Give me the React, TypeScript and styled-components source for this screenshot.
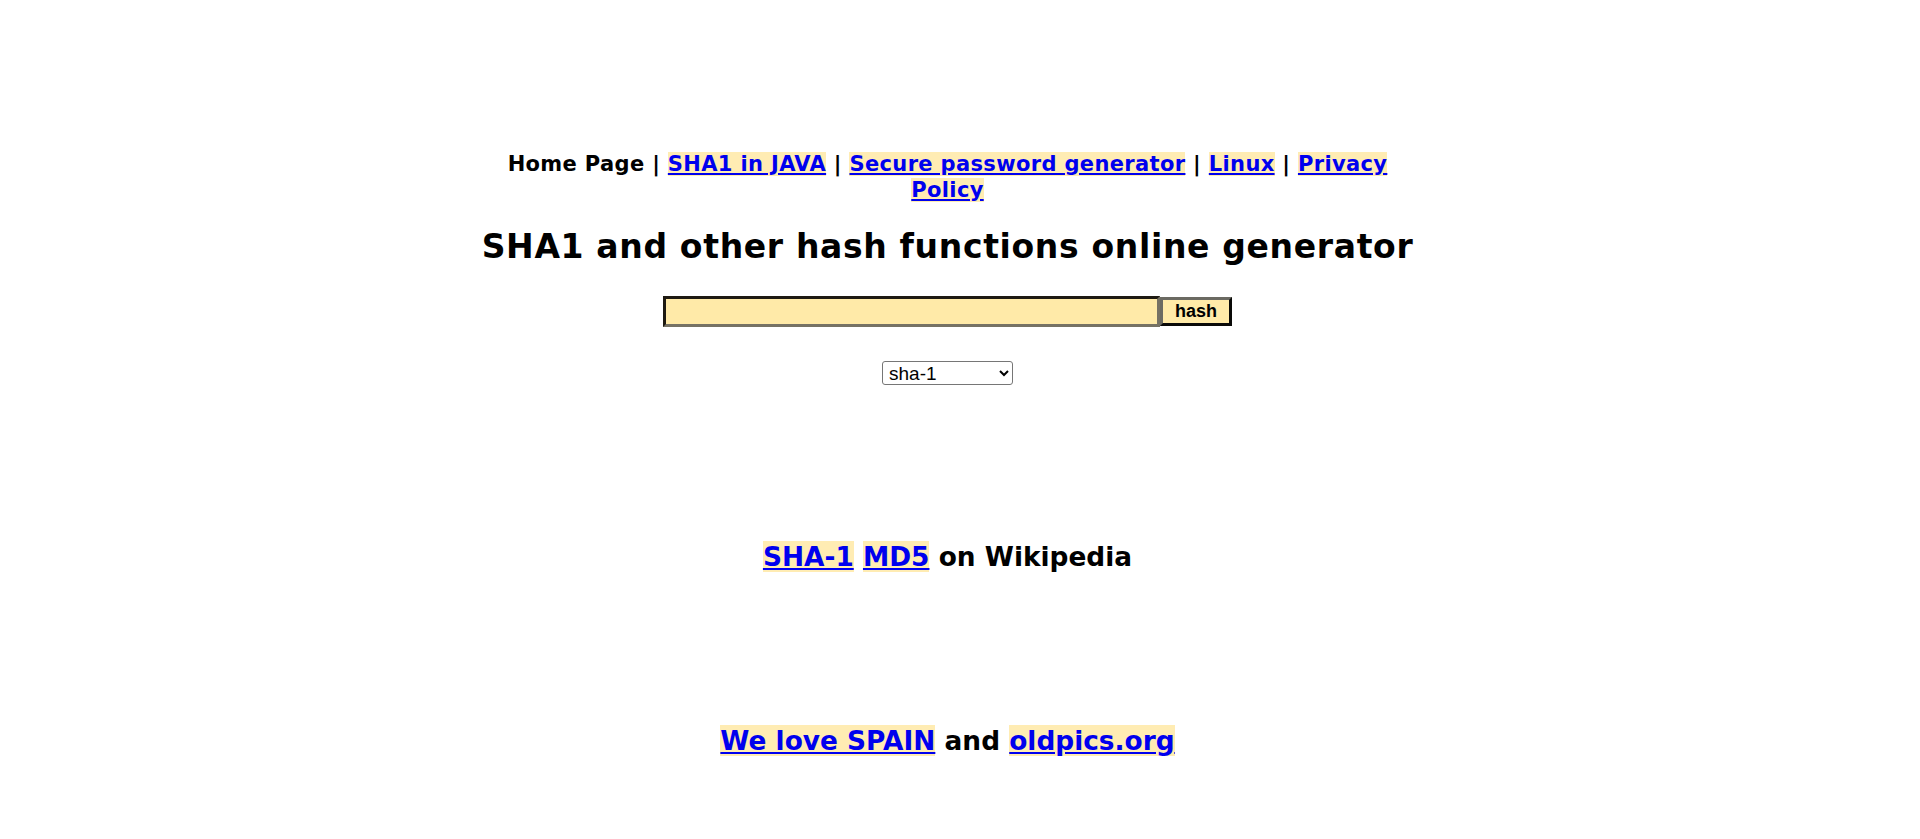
import React from "react";
import styled, { createGlobalStyle } from "styled-components";

const GlobalStyle = createGlobalStyle`
  html, body {
    margin: 0;
    padding: 0;
    background: #ffffff;
  }
  body {
    font-family: "DejaVu Sans", Verdana, sans-serif;
    color: #000000;
  }
  ::-webkit-scrollbar {
    width: 17px;
    background: #f1f1f1;
  }
  ::-webkit-scrollbar-track {
    background: #f1f1f1;
  }
  ::-webkit-scrollbar-thumb {
    background: #c1c1c1;
    border-left: 2px solid #f1f1f1;
    border-right: 2px solid #f1f1f1;
  }
  ::-webkit-scrollbar-button:single-button {
    display: block;
    height: 17px;
    background: #f1f1f1;
  }
`;

const Page = styled.div`
  min-height: 2000px;
  display: flex;
  flex-direction: column;
  align-items: center;
  padding: 152px 25px 0 0;
  box-sizing: border-box;
`;

const Nav = styled.nav`
  width: 920px;
  text-align: center;
  font-size: 21px;
  font-weight: bold;
  letter-spacing: 0.35px;
  line-height: 25.5px;
`;

const HiLink = styled.a`
  color: #0000ee;
  background: #ffecb3;
  text-decoration: underline;
`;

const Title = styled.h1`
  margin: 24.3px 0 0;
  font-size: 33px;
  font-weight: bold;
  letter-spacing: 0.66px;
  line-height: normal;
  white-space: nowrap;
`;

const HashForm = styled.form`
  display: flex;
  align-items: center;
  margin-top: 29.7px;
`;

const HashInput = styled.input`
  box-sizing: border-box;
  width: 497px;
  height: 31px;
  background: #ffeaa8;
  border: 3px solid;
  border-top-color: #1e1a12;
  border-left-color: #1e1a12;
  border-bottom-color: #767264;
  border-right-color: #767264;
  padding: 0 4px;
  font-size: 16px;
  outline: none;
`;

const HashButton = styled.button`
  box-sizing: border-box;
  width: 72px;
  height: 29px;
  background: #ffeaa8;
  border: 3px solid;
  border-top-color: #6b6a62;
  border-left-color: #6b6a62;
  border-bottom-color: #0a0a08;
  border-right-color: #0a0a08;
  font-family: "Liberation Sans", Arial, sans-serif;
  font-weight: bold;
  font-size: 18px;
  color: #000;
  padding: 0;
  cursor: pointer;
`;

const AlgoSelect = styled.select`
  margin-top: 34px;
  box-sizing: border-box;
  width: 131px;
  height: 24px;
  font-family: "Liberation Sans", Arial, sans-serif;
  font-size: 19px;
  color: #000;
  background: #fff;
  border: 1px solid #767676;
  border-radius: 3px;
  padding: 0 2px;
`;

const BigLine = styled.p<{ $gap: number }>`
  margin: ${(p) => p.$gap}px 0 0;
  font-size: 26.4px;
  font-weight: bold;
  line-height: normal;
  text-align: center;
`;

export default function App() {
  return (
    <>
      <GlobalStyle />
      <Page>
        <Nav>
          Home Page | <HiLink href="#">SHA1 in JAVA</HiLink> |{" "}
          <HiLink href="#">Secure password generator</HiLink> |{" "}
          <HiLink href="#">Linux</HiLink> | <HiLink href="#">Privacy Policy</HiLink>
        </Nav>
        <Title>SHA1 and other hash functions online generator</Title>
        <HashForm onSubmit={(e) => e.preventDefault()}>
          <HashInput type="text" />
          <HashButton type="submit">hash</HashButton>
        </HashForm>
        <AlgoSelect defaultValue="sha-1">
          <option value="sha-1">sha-1</option>
          <option value="md5">md5</option>
          <option value="sha-256">sha-256</option>
          <option value="sha-512">sha-512</option>
        </AlgoSelect>
        <BigLine $gap={155.8}>
          <HiLink href="#">SHA-1</HiLink> <HiLink href="#">MD5</HiLink> on Wikipedia
        </BigLine>
        <BigLine $gap={153.5}>
          <HiLink href="#">We love SPAIN</HiLink> and <HiLink href="#">oldpics.org</HiLink>
        </BigLine>
      </Page>
    </>
  );
}
